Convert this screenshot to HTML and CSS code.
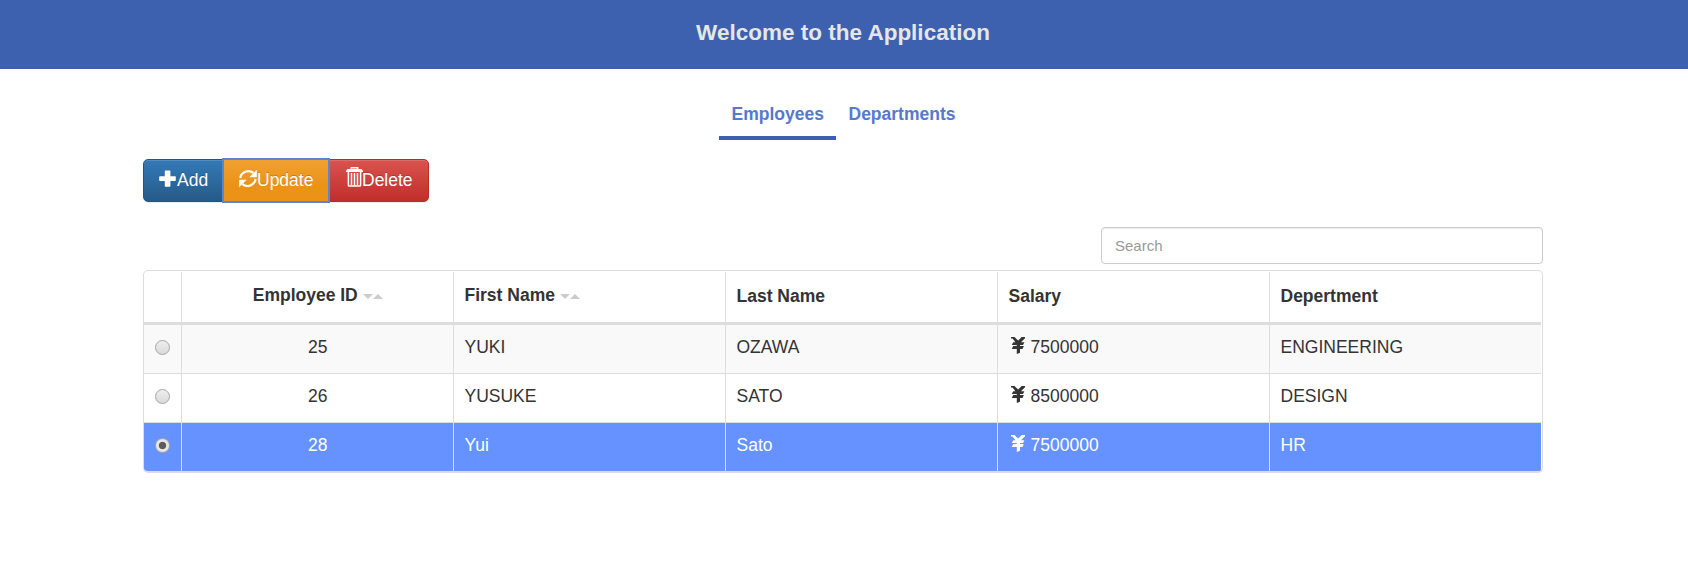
FILE: index.html
```html
<!DOCTYPE html>
<html lang="en">
<head>
<meta charset="utf-8">
<title>Application</title>
<link rel="stylesheet" href="styles.css">
</head>
<body>
<svg class="defs" width="0" height="0">
  <symbol id="yen" viewBox="0 0 14 17">
    <path fill="currentColor" d="M0 0H3.500L7.200 3.600 10.700 0H14V1.200L10 5.300H13.400L12 8.100H9V9.100H12.900L11.500 11.900H9V15.800L5.800 17V11.900H.8L2.200 9.100H5.800V8.100H.8L2.200 5.300H4.400L1.600 1.500H0Z"/>
  </symbol>
</svg>
<header class="banner"><h1>Welcome to the Application</h1></header>
<nav class="tabs">
  <a class="tab active">Employees</a>
  <a class="tab">Departments</a>
</nav>
<main class="content">
  <div class="actions">
    <button class="btn add"><svg class="icon" width="18" height="20" viewBox="0 0 18 20"><path fill="currentColor" d="M6.500 1.500h4.200q.7 0 .7.700V7.200H16q.8 0 .8.700v3.400q0 .7-.8.700h-4.600v4.900q0 .8-.7.800H6.500q-.7 0-.7-.8v-4.900H1q-.8 0-.8-.7V7.900q0-.7.8-.7h4.800V2.200q0-.7.700-.7z"/></svg>Add</button>
    <button class="btn update"><svg class="icon" width="18" height="20" viewBox="0 0 18 20"><g fill="none" stroke="currentColor" stroke-width="2.200"><path d="M1.300 9A8 7.800 0 0 1 14.300 3.900"/><path d="M16.600 10A8 7.800 0 0 1 3.500 15.100"/></g><path fill="currentColor" d="M17.800.8V8.300H10.300zM.2 18.200V10.700H7.700z"/></svg>Update</button>
    <button class="btn delete"><svg class="icon" width="17" height="20" viewBox="0 0 17 20"><g fill="none" stroke="currentColor"><path stroke-width="1.500" d="M5.300 2.500V.8h6.400v1.700"/><path stroke-width="1.500" d="M2.400 5v13.300q0 .8.8.8h10.600q.8 0 .8-.8V5"/><path stroke-width="1.500" d="M5.500 6v12.500M8.500 6v12.500M11.500 6v12.500"/></g><path fill="currentColor" d="M1.400 2h14.200L17 4.100v.8H0v-.8z"/></svg>Delete</button>
  </div>
  <div class="toolbar"><input class="search" type="text" placeholder="Search"></div>
  <div class="grid-frame">
    <table class="grid">
      <colgroup><col class="pick"><col><col><col><col><col></colgroup>
      <thead>
        <tr>
          <th></th>
          <th class="center sortable">Employee ID<span class="down"></span><span class="up"></span></th>
          <th class="sortable">First Name<span class="down"></span><span class="up"></span></th>
          <th>Last Name</th><th>Salary</th><th>Depertment</th>
        </tr>
      </thead>
      <tbody>
        <tr class="odd"><td><span class="radio"></span></td><td class="center">25</td><td>YUKI</td><td>OZAWA</td><td><svg class="yen"><use href="#yen"/></svg>7500000</td><td>ENGINEERING</td></tr>
        <tr><td><span class="radio"></span></td><td class="center">26</td><td>YUSUKE</td><td>SATO</td><td><svg class="yen"><use href="#yen"/></svg>8500000</td><td>DESIGN</td></tr>
        <tr class="selected"><td><span class="radio checked"></span></td><td class="center">28</td><td>Yui</td><td>Sato</td><td><svg class="yen"><use href="#yen"/></svg>7500000</td><td>HR</td></tr>
      </tbody>
    </table>
  </div>
</main>
</body>
</html>
```
FILE: styles.css
```css
* { box-sizing: border-box; }
body { margin: 0; background: #fff; color: #333; font: 17.5px/25px "Liberation Sans", Arial, sans-serif; }
.defs { display: block; height: 0; }
.banner { height: 69px; background: #3d60af; padding: 19px 2px 0 0; text-align: center; }
.banner h1 { margin: 0; font-size: 22.5px; line-height: 27px; color: #e6e6e6; }
.tabs { display: flex; height: 71px; margin-left: 719px; padding-top: 24px; }
.tab { height: 47px; padding: 9px 12.500px 0; border-bottom: 4px solid transparent; color: #5679cc; font-size: 17.5px; font-weight: bold; }
.tab.active { width: 117px; border-color: #3d60af; }
.content { width: 1400px; margin-left: 143px; padding-top: 19px; }
.actions { display: flex; height: 43px; }
.btn { display: flex; align-items: center; height: 43px; padding: 0 0 1px 15px; border: 1px solid; color: #fff; font: 17.5px/25px "Liberation Sans", Arial, sans-serif; text-shadow: 0 -1px 0 rgba(0,0,0,.2); box-shadow: inset 0 1px 0 rgba(255,255,255,.15), 0 1px 1px rgba(0,0,0,.075); }
.icon { flex: none; margin-top: -3px; }
.add { width: 80px; border-color: #245580; border-radius: 5px 0 0 5px; background: linear-gradient(#337ab7, #265a88); }
.update { position: relative; width: 108px; height: 45px; margin: -1px -1px; border: 2px solid #5b86cf; background: linear-gradient(#f0a033, #eb9316 60%); box-shadow: none; }
.delete { width: 100px; padding-left: 16px; border-color: #b92c28; border-radius: 0 5px 5px 0; background: linear-gradient(#d9534f, #c12e2a); }
.delete .icon { margin: -7px -1px 0 0; }
.toolbar { display: flex; justify-content: flex-end; padding: 25px 0 6px; }
.search { width: 442px; height: 37px; padding: 0 13px; border: 1px solid #ccc; border-radius: 4px; font: 15px "Liberation Sans", Arial, sans-serif; box-shadow: inset 0 1px 1px rgba(0,0,0,.075); }
.search::placeholder { color: #999; opacity: 1; }
.grid-frame { height: 203px; padding: 1px 1px 0 0; border: 1px solid #ddd; border-bottom-width: 2px; border-radius: 5px; overflow: hidden; }
.grid { width: 1397px; table-layout: fixed; border-collapse: separate; border-spacing: 0; }
.pick { width: 37px; }
.grid th { height: 53px; padding: 0 10px 1px 10.500px; border-bottom: 3px solid #ddd; border-left: 1px solid #ddd; text-align: left; }
.grid th.sortable { padding-bottom: 3px; }
.grid td { height: 49px; padding: 0 10px 4px 10.500px; border-bottom: 1px solid #ddd; border-left: 1px solid #ddd; }
.grid tr > :first-child { border-left: 0; padding-left: 11px; padding-bottom: 5px; }
.grid tr > .center { text-align: center; }
.odd td { background: #f9f9f9; }
.grid .selected td { height: 48px; background: #6592ff; color: #fff; border-bottom: 0; }
.down, .up { display: inline-block; border: 5px solid transparent; vertical-align: 2px; }
.down { margin-left: 5px; border-top-color: #ccc; border-bottom: 0; }
.up { border-bottom-color: #ccc; border-top: 0; }
.radio { display: block; width: 15px; height: 15px; margin-top: 1px; border: 1px solid #a5a5a5; border-radius: 50%; background: linear-gradient(#eee, #dadada); }
.radio.checked { background: radial-gradient(circle, #5c5c5c 3.300px, #e6e6e6 4.100px); }
.yen { width: 14px; height: 17px; margin: 0 6px 0 2px; vertical-align: -1px; }
```
